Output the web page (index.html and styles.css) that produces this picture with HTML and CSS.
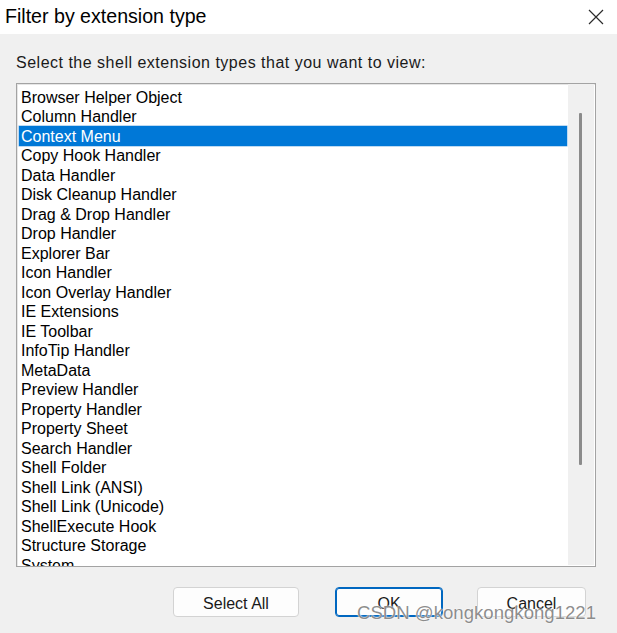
FILE: index.html
```html
<!DOCTYPE html>
<html>
<head>
<meta charset="utf-8">
<link rel="stylesheet" href="styles.css">
</head>
<body>
<div class="dialog">
  <div class="titlebar">
    <span class="title">Filter by extension type</span>
    <svg class="close" width="16" height="16" viewBox="0 0 16 16"><path d="M1 1 L15 15 M15 1 L1 15" stroke="#2b2b2b" stroke-width="1.2" fill="none"/></svg>
  </div>
  <div class="content">
    <div class="label">Select the shell extension types that you want to view:</div>
    <div class="listbox">
      <div class="list">
        <div class="row">Browser Helper Object</div>
        <div class="row">Column Handler</div>
        <div class="row selected">Context Menu</div>
        <div class="row">Copy Hook Handler</div>
        <div class="row">Data Handler</div>
        <div class="row">Disk Cleanup Handler</div>
        <div class="row">Drag &amp; Drop Handler</div>
        <div class="row">Drop Handler</div>
        <div class="row">Explorer Bar</div>
        <div class="row">Icon Handler</div>
        <div class="row">Icon Overlay Handler</div>
        <div class="row">IE Extensions</div>
        <div class="row">IE Toolbar</div>
        <div class="row">InfoTip Handler</div>
        <div class="row">MetaData</div>
        <div class="row">Preview Handler</div>
        <div class="row">Property Handler</div>
        <div class="row">Property Sheet</div>
        <div class="row">Search Handler</div>
        <div class="row">Shell Folder</div>
        <div class="row">Shell Link (ANSI)</div>
        <div class="row">Shell Link (Unicode)</div>
        <div class="row">ShellExecute Hook</div>
        <div class="row">Structure Storage</div>
        <div class="row">System</div>
      </div>
      <div class="scrollbar"><div class="thumb"></div></div>
    </div>
    <div class="buttons">
      <button class="btn btn-select">Select All</button>
      <button class="btn btn-ok">OK</button>
      <button class="btn btn-cancel">Cancel</button>
    </div>
  </div>
  <div class="watermark">CSDN @kongkongkong1221</div>
</div>
</body>
</html>
```
FILE: styles.css
```css
html, body {
  margin: 0;
  padding: 0;
}
body {
  background: #f0f0f0;
  font-family: "Liberation Sans", Arial, sans-serif;
  color: #000;
}
.dialog {
  position: relative;
  width: 617px;
  height: 633px;
  background: #f0f0f0;
  overflow: hidden;
}
.titlebar {
  height: 34px;
  background: #ffffff;
  display: flex;
  align-items: center;
  justify-content: space-between;
  padding: 0 13px 0 5px;
}
.title {
  font-size: 19.6px;
  color: #000;
  margin-top: -2px;
}
.close {
  display: block;
}
.content {
  padding: 0 0 0 16px;
}
.label {
  font-size: 16px;
  letter-spacing: 0.5px;
  color: #1a1a1a;
  height: 49px;
  line-height: 18px;
  padding-top: 20px;
  box-sizing: border-box;
}
.listbox {
  width: 580px;
  height: 484px;
  box-sizing: border-box;
  border: 1px solid #a3a3a3;
  box-shadow: inset 1px 1px 0 #e6e6e6;
  background: #fff;
  display: flex;
  overflow: hidden;
}
.list {
  width: 551px;
  padding: 3px 1px 0 2px;
  box-sizing: border-box;
  overflow: hidden;
}
.row {
  height: 19.5px;
  line-height: 18.5px;
  padding-top: 1.5px;
  box-sizing: border-box;
  font-size: 16px;
  padding-left: 2px;
  white-space: nowrap;
  color: #000;
}
.row.selected {
  background: #0078d7;
  color: #fff;
  box-shadow: 0 0 0 0.5px #7fb6e6;
}
.scrollbar {
  width: 26px;
  background: #f0f0f0;
  margin: 0 0 1px 0;
  display: flex;
  justify-content: flex-start;
  padding-left: 11px;
  box-sizing: border-box;
}
.thumb {
  width: 3px;
  height: 352px;
  margin-top: 29px;
  background: #8b8b8b;
  border-radius: 1px;
}
.buttons {
  display: flex;
  padding-top: 20px;
  padding-left: 157px;
}
.btn {
  height: 30px;
  box-sizing: border-box;
  background: #fdfdfd;
  border: 1px solid #d3d3d3;
  border-radius: 4px;
  font-family: "Liberation Sans", Arial, sans-serif;
  font-size: 16px;
  color: #1a1a1a;
  padding: 3px 0 0 0;
}
.btn-select {
  width: 126px;
}
.btn-ok {
  width: 108px;
  margin-left: 36px;
  border-color: #0067c0;
  box-shadow: inset 0 0 0 1px #0067c0;
}
.btn-cancel {
  width: 109px;
  margin-left: 34px;
}
.watermark {
  position: absolute;
  left: 357px;
  top: 602px;
  font-size: 18.6px;
  color: rgba(120, 120, 120, 0.85);
  text-shadow: 0 0 1px #fff, 0 0 2px #fff;
  white-space: nowrap;
}
```
